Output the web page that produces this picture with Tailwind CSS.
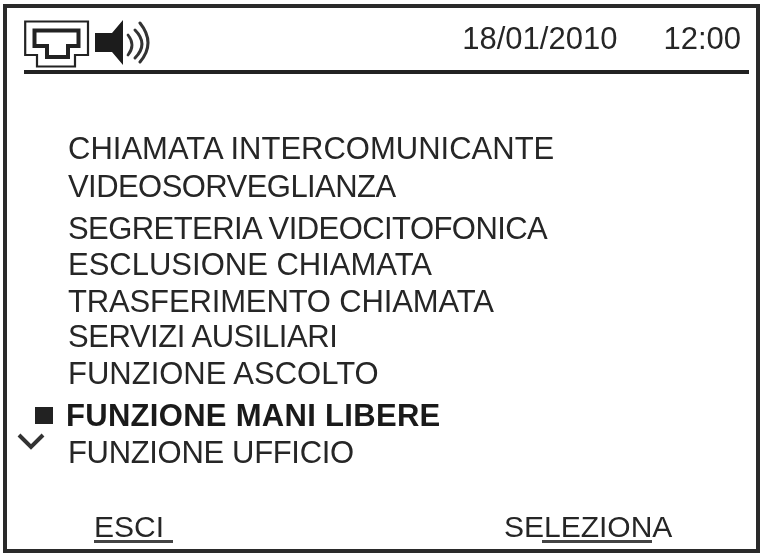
<!DOCTYPE html>
<html lang="it">
<head>
<meta charset="UTF-8">
<title>Menu</title>
<script src="https://cdn.jsdelivr.net/npm/@tailwindcss/browser@4"></script>
</head>
<body class="bg-white w-[762px] h-[554px] overflow-hidden font-['Liberation_Sans',sans-serif] text-[#262626]">
<div class="ml-[3px] mt-[4px] w-[757px] h-[549px] border-[4px] border-[#2a2a2a] flex flex-col blur-[0.5px]">
    <header class="ml-[17px] mr-[7px] mt-[7px] h-[59px] border-b-[4px] border-[#222] flex items-start justify-between">
        <div class="flex items-start gap-[3px] mt-[3px]">
            <svg width="68" height="52" viewBox="0 0 68 52" fill="none" stroke="#222" stroke-width="2.2">
                <path d="M1.2 3.5H64V37H51V48.5H13V37H1.2Z"/>
                <path d="M10.5 12.5H54.5V28H44V39H23V28H10.5Z" stroke-width="4"/>
            </svg>
            <svg width="56" height="52" viewBox="0 0 56 52" fill="none" stroke="#333" stroke-linecap="round">
                <path d="M0 15H17L28 2V47L17 34H0Z" fill="#1c1c1c" stroke="none"/>
                <path d="M33 17Q41 27 33 37" stroke-width="2.8"/>
                <path d="M40 12Q54 26 40 40" stroke-width="3"/>
                <path d="M45 5Q61 25 45 44" stroke-width="3"/>
            </svg>
        </div>
        <div class="flex gap-[46px] text-[31px] leading-[32px] mt-[8px] mr-[8px]">
            <span>18/01/2010</span>
            <span>12:00</span>
        </div>
    </header>
    <ul class="relative ml-[61px] mt-[58px] text-[31px] leading-[34px]">
        <li>CHIAMATA INTERCOMUNICANTE</li>
        <li class="mt-[4px] tracking-[-0.56px]">VIDEOSORVEGLIANZA</li>
        <li class="mt-[8px] tracking-[-0.56px]">SEGRETERIA VIDEOCITOFONICA</li>
        <li class="mt-[2px]">ESCLUSIONE CHIAMATA</li>
        <li class="mt-[3px] tracking-[-0.14px]">TRASFERIMENTO CHIAMATA</li>
        <li class="mt-[1px] tracking-[-0.44px]">SERVIZI AUSILIARI</li>
        <li class="mt-[3px]">FUNZIONE ASCOLTO</li>
        <li class="mt-[8px] font-bold relative -ml-[2px] tracking-[0.3px] text-[#1a1a1a]">
            <span class="absolute left-[-31px] top-[8px] w-[18px] h-[17px] bg-[#222]"></span>
            FUNZIONE MANI LIBERE
        </li>
        <li class="mt-[3px] relative tracking-[-0.33px]">
            <svg class="absolute left-[-51px] top-[-3px]" width="28" height="18" viewBox="0 0 28 18" fill="none" stroke="#333" stroke-width="4"><path d="M2 2L14 14L26 2"/></svg>
            FUNZIONE UFFICIO
        </li>
    </ul>
    <footer class="mt-auto flex text-[30px] leading-[32px] pb-[6px]">
        <div class="ml-[87px] w-[79px] border-b-[3px] border-[#444] h-[32px]">ESCI</div>
        <div class="ml-[331px] relative h-[32px]">SELEZIONA
            <span class="absolute left-[38px] w-[110px] bottom-0 h-[3px] bg-[#444]"></span>
        </div>
    </footer>
</div>
</body>
</html>
